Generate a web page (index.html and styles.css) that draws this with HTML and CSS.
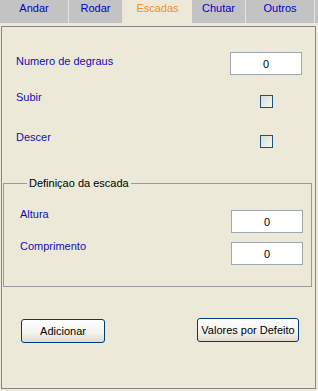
FILE: index.html
```html
<!DOCTYPE html>
<html lang="pt">
<head>
    <meta charset="UTF-8">
    <meta name="viewport" content="width=device-width, initial-scale=1.0">
    <title>Escadas</title>
    <link rel="stylesheet" href="styles.css">
</head>
<body>
    <div class="tabs">
        <div class="tab" style="width:69px">Andar</div>
        <div class="tab" style="width:54px">Rodar</div>
        <div class="tab active" style="width:69px">Escadas</div>
        <div class="tab" style="width:54px">Chutar</div>
        <div class="tab" style="width:69px">Outros</div>
    </div>
    <div class="strip"></div>
    <div class="panel">
        <div class="row first">
            <span class="label">Numero de degraus</span>
            <input class="field" type="text" value="0" readonly>
        </div>
        <div class="row check-row">
            <span class="label">Subir</span>
            <div class="ctrl"><span class="check"></span></div>
        </div>
        <div class="row check-row second">
            <span class="label">Descer</span>
            <div class="ctrl"><span class="check"></span></div>
        </div>

        <fieldset class="group">
            <legend>Definiçao da escada</legend>
            <div class="grow">
                <span class="label">Altura</span>
                <input class="field" type="text" value="0" readonly>
            </div>
            <div class="grow second">
                <span class="label">Comprimento</span>
                <input class="field" type="text" value="0" readonly>
            </div>
        </fieldset>

        <div class="buttons">
            <button class="btn add">Adicionar</button>
            <button class="btn defaults">Valores por Defeito</button>
        </div>
    </div>
</body>
</html>
```

FILE: styles.css
```css
*{margin: 0; padding: 0; box-sizing: border-box;}
body{
    width: 318px;
    height: 391px;
    background-color: #ece9d8;
    font-family: "Liberation Sans", Arial, sans-serif;
    font-size: 11px;
    line-height: 13px;
    overflow: hidden;
}

/* abas */
.tabs{
    display: flex;
    height: 23px;
    background-color: #c3c3c3;
}
.tab{
    height: 23px;
    padding-top: 2px;
    text-align: center;
    color: #0000cc;
    border-right: 1px solid #e4e4e4;
}
.tab.active{
    height: 26px;
    background-color: #ece9d8;
    color: #f0902a;
    border-right: none;
}
.strip{
    height: 3px;
}

/* painel */
.panel{
    margin-left: 1px;
    width: 315px;
    height: 363px;
    border: 1px solid #868686;
    background-color: #ece9d8;
}
.row{
    display: flex;
    justify-content: space-between;
    align-items: flex-start;
    padding-left: 14px;
    padding-right: 13px;
}
.row.first{
    margin-top: 25px;
}
.row.first .label{
    padding-top: 3px;
}
.check-row{
    margin-top: 16px;
}
.check-row.second{
    margin-top: 23px;
}
.label{
    color: #0f0fb8;
}
.ctrl{
    width: 72px;
    display: flex;
    justify-content: center;
    padding-top: 4px;
}
.check{
    width: 13px;
    height: 13px;
    border: 1px solid #1c5180;
    background: linear-gradient(135deg, #dcdcd6, #f6f6f4);
}
.field{
    width: 72px;
    height: 23px;
    border: 1px solid #9da8b0;
    background-color: #fff;
    font-family: "Liberation Sans", Arial, sans-serif;
    font-size: 11px;
    text-align: center;
    color: #000;
    outline: none;
}

/* grupo */
.group{
    margin: 29px 3px 0 1px;
    padding: 18px 8px 21px 16px;
    border: 1px solid #9a9a9a;
}
.group legend{
    margin-left: 7px;
    padding: 0 2px;
    color: #000;
}
.grow{
    display: flex;
    justify-content: space-between;
    align-items: flex-start;
}
.grow .field{
    margin-top: 2px;
}
.grow.second{
    margin-top: 7px;
}

/* botoes */
.buttons{
    display: flex;
    justify-content: space-between;
    align-items: flex-start;
    margin-top: 31px;
    padding-left: 19px;
    padding-right: 16px;
}
.btn{
    height: 24px;
    border: 1px solid #003c74;
    border-radius: 3px;
    background: linear-gradient(#ffffff, #f3f2ec 60%, #dedbcf);
    font-family: "Liberation Sans", Arial, sans-serif;
    font-size: 11px;
    color: #000;
}
.btn.add{
    width: 84px;
    margin-top: 1px;
}
.btn.defaults{
    width: 102px;
}
```
